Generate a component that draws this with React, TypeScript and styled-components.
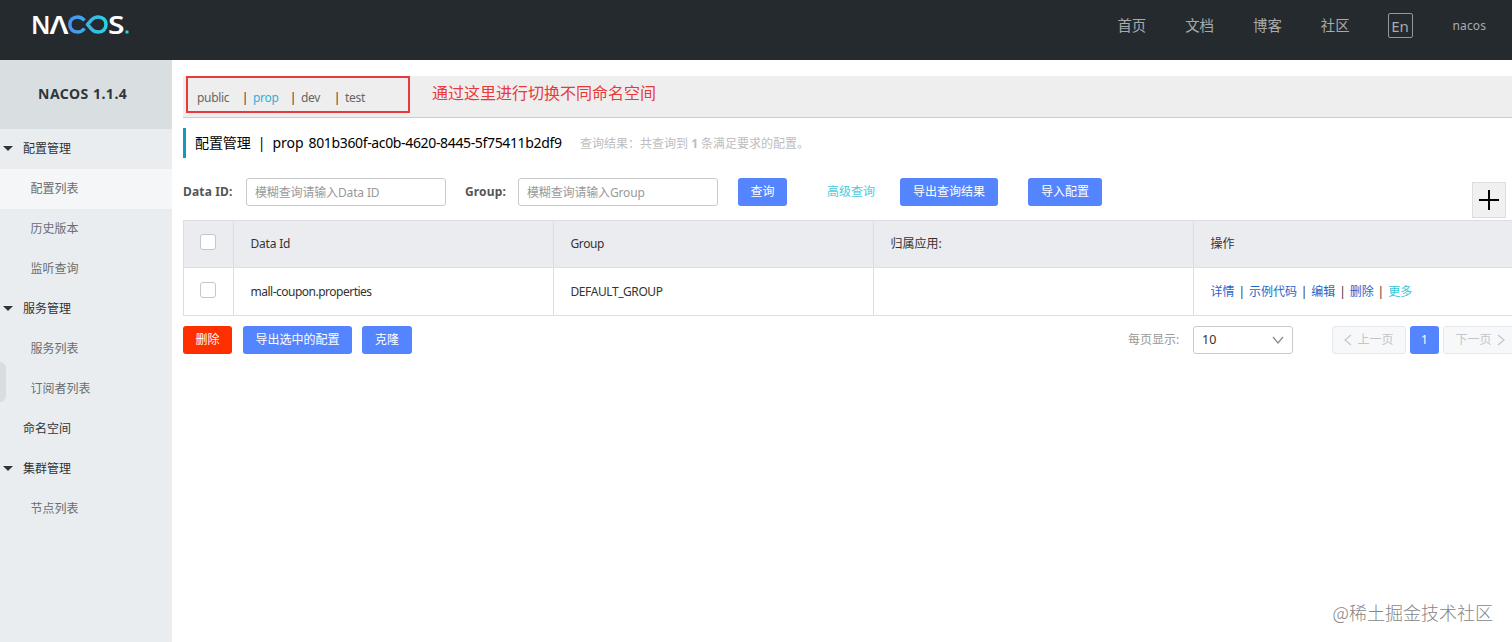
import React from 'react';
import styled, { createGlobalStyle } from 'styled-components';

const GlobalStyle = createGlobalStyle`
  * { box-sizing: border-box; }
  body {
    margin: 0;
    overflow: hidden;
    background: #fff;
    color: #333;
    font: 12px/1.3 'Noto Sans', 'Noto Sans CJK SC', sans-serif;
  }
  button, input { font: inherit; }
`;

const Page = styled.div`
  height: 642px;
  display: flex;
  flex-direction: column;
  overflow: hidden;
  position: relative;
`;

const Header = styled.header`
  height: 60px;
  flex: none;
  background: #252a2f;
  display: flex;
  justify-content: space-between;
  padding: 0 26px 0 30px;
`;

const Logo = styled.div`
  display: flex;
  align-items: center;
  height: 50px;
`;

const Nav = styled.nav`
  display: flex;
  align-items: center;
  height: 52px;
  gap: 39px;
  font-size: 14.4px;
  color: #a8aaac;
`;

const Language = styled.span`
  width: 25px;
  height: 25px;
  border: 1px solid #92979b;
  border-radius: 2px;
  display: flex;
  align-items: center;
  justify-content: center;
  font-size: 15px;
  line-height: 22px;
  margin: 0 1px 1px -1px;
`;

const User = styled.span`
  font-size: 12px;
  letter-spacing: 0.1px;
`;

const Body = styled.div`
  display: flex;
  flex: 1;
  min-height: 0;
`;

const Sidebar = styled.aside`
  width: 172px;
  flex: none;
  background: #e9edf0;
  position: relative;
`;

const Version = styled.h1`
  margin: 0;
  height: 69px;
  padding-left: 38px;
  background: #d9dee1;
  color: #30353a;
  font: bold 14px/68px 'Noto Sans', sans-serif;
  letter-spacing: 0.5px;
`;

const Group = styled.div`
  height: 40px;
  display: flex;
  align-items: center;
  padding-left: 3px;
  color: #333;
`;

const Caret = styled.span<{ $hidden?: boolean }>`
  border: 5px solid transparent;
  border-top-color: ${p => (p.$hidden ? 'transparent' : '#30353a')};
  border-bottom: 0;
  margin: -2px 10px 0 0;
`;

const Item = styled.a<{ $active?: boolean }>`
  display: flex;
  align-items: center;
  height: 40px;
  padding-left: 30.5px;
  color: #6b6e70;
  background: ${p => (p.$active ? '#f4f6f8' : 'transparent')};
`;

const Handle = styled.span`
  position: absolute;
  left: 0;
  top: 302px;
  width: 6px;
  height: 40px;
  background: #dadddf;
  border-radius: 0 8px 8px 0;
`;

const Main = styled.main`
  flex: 1;
  min-width: 0;
  padding: 16px 0 0 11px;
  display: flex;
  flex-direction: column;
`;

const NamespaceBar = styled.div`
  height: 42px;
  background: #eee;
  border-bottom: 1px solid #ccc;
  display: flex;
  padding-left: 3px;
`;

const NamespaceFrame = styled.div`
  width: 224px;
  height: 37px;
  border: 2px solid #e83a3a;
  display: flex;
  align-items: center;
  padding: 7px 0 0 9px;
  color: #666;
`;

const Namespace = styled.span<{ $active?: boolean; $width: number }>`
  width: ${p => p.$width}px;
  letter-spacing: -0.3px;
  color: ${p => (p.$active ? '#33b0d4' : 'inherit')};
`;

const Bar = styled.span<{ $gap: number }>`
  width: 2px;
  margin-right: ${p => p.$gap}px;
  color: #333;
  display: flex;
  justify-content: center;
`;

const Annotation = styled.p`
  margin: 0 0 0 22px;
  color: #e83a3a;
  font-size: 16px;
  line-height: 35px;
`;

const Heading = styled.h2`
  margin: 10px 0 0;
  height: 30px;
  border-left: 3px solid #109dbd;
  padding-left: 9px;
  display: flex;
  align-items: center;
  font-weight: 400;
  font-size: 14px;
  color: #000;
  white-space: pre;
`;

const Title = styled.span`
  width: 113.5px;
  letter-spacing: -0.08px;
`;

const Identifier = styled.span`
  width: 254px;
  letter-spacing: -0.35px;
`;

const Summary = styled.span`
  margin: 1px 0 0 17.5px;
  font-size: 12px;
  color: #bdbdbd;
`;

const Filters = styled.form`
  height: 28px;
  margin: 20px 0 14px;
  display: flex;
  align-items: center;
`;

const Label = styled.label<{ $width: number }>`
  width: ${p => p.$width}px;
  font-weight: 700;
  letter-spacing: 0.15px;
  color: #555;
`;

const Input = styled.input<{ $gap: number }>`
  width: 200px;
  height: 28px;
  border: 1px solid #c8cacc;
  border-radius: 3px;
  padding: 0 8px;
  margin-right: ${p => p.$gap}px;
  outline: 0;
  &::placeholder { color: #999; opacity: 1; letter-spacing: -0.15px; }
`;

const Button = styled.button<{ $width: number; $gap?: number; $danger?: boolean }>`
  width: ${p => p.$width}px;
  height: 28px;
  padding: 0;
  margin-right: ${p => p.$gap ?? 0}px;
  border: 0;
  border-radius: 3px;
  color: #fff;
  background: ${p => (p.$danger ? '#ff3000' : '#5584ff')};
`;

const Advanced = styled.a`
  width: 73px;
  color: #4acbdc;
`;

const AddButton = styled.button`
  align-self: flex-start;
  margin: 4px 6px 0 auto;
  width: 34px;
  height: 36px;
  flex: none;
  padding: 0;
  border: 1px solid #ddd;
  background: #f0f0f0;
  display: grid;
  place-items: center;
`;

const Table = styled.div`
  width: 1331px;
  border: 1px solid #dcdee3;
  border-right: 0;
`;

const Row = styled.div<{ $head?: boolean }>`
  display: grid;
  grid-template-columns: 49px 320px 320px 320px 1fr;
  height: ${p => (p.$head ? 46 : 48)}px;
  background: ${p => (p.$head ? '#ebecf0' : '#fff')};
  & + & { border-top: 1px solid #dcdee3; }
`;

const Cell = styled.div<{ $check?: boolean }>`
  display: flex;
  align-items: center;
  padding-left: ${p => (p.$check ? 15.5 : 16.5)}px;
  padding-bottom: ${p => (p.$check ? 4 : 0)}px;
  color: #333;
  & + & { border-left: 1px solid #dcdee3; }
`;

const LatinText = styled.span<{ $tracking: number }>`
  letter-spacing: ${p => p.$tracking}px;
`;

const Checkbox = styled.span`
  width: 16px;
  height: 16px;
  border: 1px solid #c4c6cf;
  border-radius: 3px;
  background: #fff;
`;

const Action = styled.a<{ $more?: boolean }>`
  color: ${p => (p.$more ? '#35c6da' : '#1e66c9')};
`;

const Separator = styled.span`
  width: 14.4px;
  text-align: center;
`;

const Footer = styled.div`
  width: 1334px;
  height: 28px;
  margin-top: 10px;
  display: flex;
  align-items: center;
`;

const PageSizeLabel = styled.span`
  margin-left: auto;
  width: 65px;
  color: #999;
`;

const Select = styled.div`
  width: 100px;
  height: 28px;
  border: 1px solid #c8cacc;
  border-radius: 3px;
  display: flex;
  align-items: center;
  justify-content: space-between;
  padding: 0 8px;
  margin-right: 39px;
  font-size: 12.5px;
  svg { color: #888; }
`;

const PageButton = styled.span`
  width: 74px;
  flex: none;
  height: 28px;
  border: 1px solid #e6e7eb;
  border-radius: 3px;
  background: #f7f8fa;
  color: #c3c5c8;
  display: flex;
  align-items: center;
  justify-content: center;
  gap: 5px;
`;

const CurrentPage = styled.span`
  width: 29px;
  height: 28px;
  margin: 0 4px;
  border-radius: 3px;
  background: #5584ff;
  color: #fff;
  display: grid;
  place-items: center;
`;

const Watermark = styled.div`
  position: absolute;
  right: 19px;
  bottom: 18px;
  color: #858585;
  font: 300 18px/24px 'Noto Sans CJK SC', sans-serif;
`;

const Chevron = ({ d, w, h }: { d: string; w: number; h: number }) => (
  <svg width={w} height={h} viewBox={`0 0 ${w} ${h}`} fill="none" stroke="currentColor" strokeWidth="1.2">
    <path d={d} />
  </svg>
);

const NacosLogo = () => (
  <svg width="104" height="40" viewBox="-2 -8 104 40" fill="none">
    <defs>
      <linearGradient id="loop" x1="36" x2="76" y1="0" y2="0" gradientUnits="userSpaceOnUse">
        <stop stopColor="#4b8ff5" />
        <stop offset="1" stopColor="#27d5df" />
      </linearGradient>
    </defs>
    <g fill="#fff" fontFamily="'Noto Sans', sans-serif" fontWeight="600" fontSize="25">
      <text x="-1" y="20.500" textLength="19.500" lengthAdjust="spacingAndGlyphs">N</text>
      <text x="17.500" y="20.500" textLength="19" lengthAdjust="spacingAndGlyphs">Λ</text>
      <text x="76" y="20.500" textLength="16.500" lengthAdjust="spacingAndGlyphs">S</text>
    </g>
    <g stroke="url(#loop)" strokeWidth="3.500" strokeLinejoin="round">
      <path d="M52.500 7.500C50.500 5 48.500 3.900 45.500 3.900C41 3.900 37.800 7.200 37.800 11.500S41 19.100 45.500 19.100C48.500 19.100 50.500 18 52.500 15.500" />
      <path d="M55.500 11.500L59.500 6.900C61.300 4.900 63.500 3.900 66.300 3.900C70.800 3.900 74 7.200 74 11.500S70.800 19.100 66.300 19.100C63.500 19.100 61.300 18.100 59.500 16.100Z" />
    </g>
    <rect x="93.500" y="17.500" width="3" height="3" rx=".5" fill="#27d5df" />
  </svg>
);

const menu = [
  { title: '配置管理', items: ['配置列表', '历史版本', '监听查询'] },
  { title: '服务管理', items: ['服务列表', '订阅者列表'] },
  { title: '命名空间', items: [] },
  { title: '集群管理', items: ['节点列表'] },
];

export default function App() {
  return (
    <Page>
      <GlobalStyle />
      <Header>
        <Logo><NacosLogo /></Logo>
        <Nav>
          <span>首页</span>
          <span>文档</span>
          <span>博客</span>
          <span>社区</span>
          <Language>En</Language>
          <User>nacos</User>
        </Nav>
      </Header>
      <Body>
        <Sidebar>
          <Version>NACOS 1.1.4</Version>
          {menu.map(group => (
            <React.Fragment key={group.title}>
              <Group><Caret $hidden={!group.items.length} />{group.title}</Group>
              {group.items.map(item => (
                <Item key={item} $active={item === '配置列表'}>{item}</Item>
              ))}
            </React.Fragment>
          ))}
          <Handle />
        </Sidebar>
        <Main>
          <NamespaceBar>
            <NamespaceFrame>
              <Namespace $width={47}>public</Namespace>
              <Bar $gap={7}>|</Bar>
              <Namespace $width={39} $active>prop</Namespace>
              <Bar $gap={7}>|</Bar>
              <Namespace $width={35}>dev</Namespace>
              <Bar $gap={7}>|</Bar>
              <Namespace $width={30}>test</Namespace>
            </NamespaceFrame>
            <Annotation>通过这里进行切换不同命名空间</Annotation>
          </NamespaceBar>
          <Heading>
            <Title>{'配置管理  |  prop  '}</Title>
            <Identifier>801b360f-ac0b-4620-8445-5f75411b2df9</Identifier>
            <Summary>查询结果：共查询到 <b>1</b> 条满足要求的配置。</Summary>
          </Heading>
          <Filters>
            <Label $width={63}>Data ID:</Label>
            <Input $gap={19} placeholder="模糊查询请输入Data ID" />
            <Label $width={53}>Group:</Label>
            <Input $gap={20} placeholder="模糊查询请输入Group" />
            <Button type="button" $width={49} $gap={40}>查询</Button>
            <Advanced>高级查询</Advanced>
            <Button type="button" $width={98} $gap={30}>导出查询结果</Button>
            <Button type="button" $width={74}>导入配置</Button>
            <AddButton type="button">
              <svg width="20" height="20" viewBox="0 0 20 20" stroke="#000" strokeWidth="2">
                <path d="M10 0V20M0 10H20" />
              </svg>
            </AddButton>
          </Filters>
          <Table>
            <Row $head>
              <Cell $check><Checkbox /></Cell>
              <Cell><LatinText $tracking={-0.2}>Data Id</LatinText></Cell>
              <Cell><LatinText $tracking={-0.4}>Group</LatinText></Cell>
              <Cell>归属应用:</Cell>
              <Cell>操作</Cell>
            </Row>
            <Row>
              <Cell $check><Checkbox /></Cell>
              <Cell><LatinText $tracking={-0.5}>mall-coupon.properties</LatinText></Cell>
              <Cell><LatinText $tracking={-0.42}>DEFAULT_GROUP</LatinText></Cell>
              <Cell />
              <Cell>
                <Action>详情</Action><Separator>|</Separator>
                <Action>示例代码</Action><Separator>|</Separator>
                <Action>编辑</Action><Separator>|</Separator>
                <Action>删除</Action><Separator>|</Separator>
                <Action $more>更多</Action>
              </Cell>
            </Row>
          </Table>
          <Footer>
            <Button $width={49} $gap={11} $danger>删除</Button>
            <Button $width={109} $gap={10}>导出选中的配置</Button>
            <Button $width={50}>克隆</Button>
            <PageSizeLabel>每页显示:</PageSizeLabel>
            <Select>10<Chevron w={12} h={8} d="M1 1L6 7L11 1" /></Select>
            <PageButton><Chevron w={8} h={12} d="M7 1L1 6L7 11" />上一页</PageButton>
            <CurrentPage>1</CurrentPage>
            <PageButton>下一页<Chevron w={8} h={12} d="M1 1L7 6L1 11" /></PageButton>
          </Footer>
        </Main>
      </Body>
      <Watermark>@稀土掘金技术社区</Watermark>
    </Page>
  );
}
